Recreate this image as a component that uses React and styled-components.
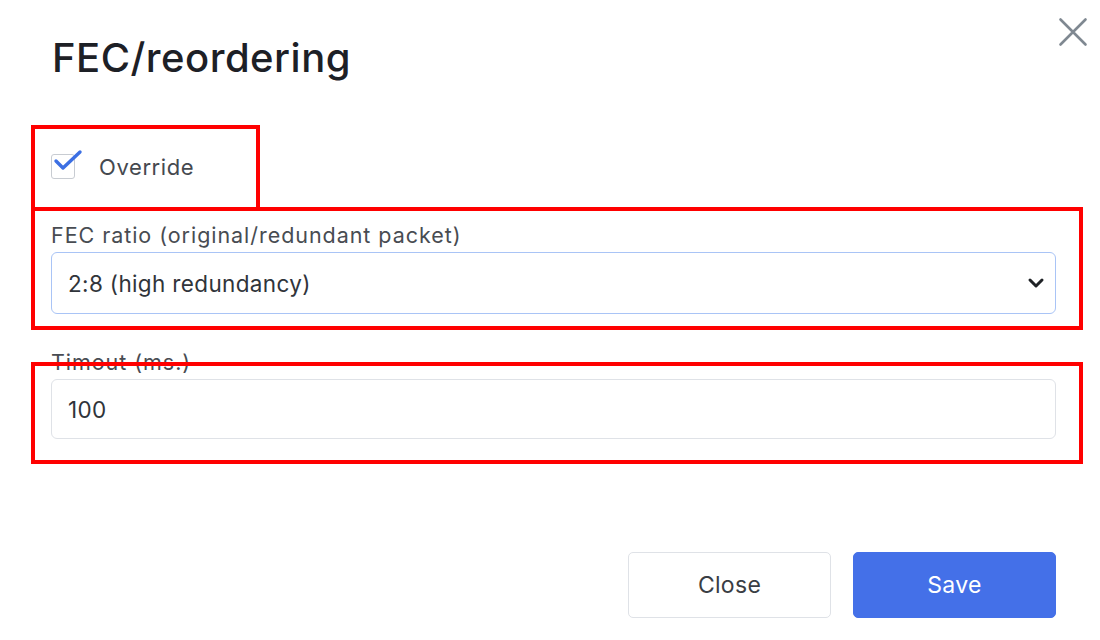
import React from 'react'
import styled, { createGlobalStyle } from 'styled-components'

const GlobalStyle = createGlobalStyle`
	html, body {
		margin: 0;
		padding: 0;
		background: #fff;
	}
	body {
		font-family: Inter, "Noto Sans", sans-serif;
		color: #22252a;
	}
`

const Dialog = styled.div`
	position: relative;
	width: 1100px;
	height: 640px;
	box-sizing: border-box;
	padding: 0 44px 0 51px;
`

const Header = styled.div`
	display: flex;
	justify-content: space-between;
	align-items: flex-start;
	height: 120px;
`

const Title = styled.h2`
	margin: 33px 0 0 1px;
	font-size: 40px;
	font-weight: 450;
	letter-spacing: 0.5px;
	color: #1d2026;
`

const CloseIcon = styled.button`
	margin: 15px -34px 0 0;
	padding: 0;
	border: none;
	background: none;
	width: 34px;
	height: 34px;
	display: flex;
	align-items: center;
	justify-content: center;
`

const CheckRow = styled.label`
	display: flex;
	align-items: center;
	gap: 24px;
	height: 50px;
	margin-top: 22px;
	font-size: 22px;
	letter-spacing: 0.6px;
	color: #45494f;
`

const Box = styled.span`
	position: relative;
	width: 22px;
	height: 23px;
	margin-top: -2px;
	border: 1.5px solid #c8ccd2;
	border-radius: 3px;
	flex-shrink: 0;

	svg {
		position: absolute;
		left: 1px;
		top: -6px;
	}
`

const Field = styled.div`
	display: flex;
	flex-direction: column;
	gap: 4px;
	margin-top: ${p => p.$top}px;
`

const Label = styled.div`
	font-size: 21.5px;
	letter-spacing: 0.95px;
	color: #484c52;
	line-height: 26px;
`

const Control = styled.div`
	display: flex;
	align-items: center;
	justify-content: space-between;
	height: ${p => p.$h}px;
	box-sizing: border-box;
	padding: 0 10px 0 16px;
	border: 1.5px solid ${p => (p.$focus ? '#a9c4f6' : '#dfe2e7')};
	border-radius: 6px;
	font-size: 22.5px;
	letter-spacing: 0.35px;
	color: #30343a;
`

const Footer = styled.div`
	display: flex;
	justify-content: flex-end;
	gap: 22px;
	margin-top: 113px;
`

const Button = styled.button`
	width: 203px;
	height: 66px;
	border-radius: 5px;
	font-family: inherit;
	font-size: 23px;
	letter-spacing: 0.3px;
	border: 1.5px solid ${p => (p.$primary ? '#4470e8' : '#dfe2e7')};
	background: ${p => (p.$primary ? '#4470e8' : '#fff')};
	color: ${p => (p.$primary ? '#fff' : '#3a3e44')};
`

const Highlight = styled.div`
	position: absolute;
	left: ${p => p.$x}px;
	top: ${p => p.$y}px;
	width: ${p => p.$w}px;
	height: ${p => p.$h}px;
	border: 4px solid #ff0000;
	box-sizing: border-box;
	pointer-events: none;
`

const App = () => {
	return (
		<>
			<GlobalStyle />
			<Dialog>
				<Header>
					<Title>FEC/reordering</Title>
					<CloseIcon>
						<svg width="30" height="30" viewBox="0 0 30 30">
							<path d="M2.5 2.5 L27.5 27.5 M27.5 2.5 L2.5 27.5" stroke="#7f8891" strokeWidth="2.6" strokeLinecap="round" />
						</svg>
					</CloseIcon>
				</Header>

				<CheckRow>
					<Box>
						<svg width="30" height="24" viewBox="0 0 30 24">
							<path d="M3 12 L10 19 L27 3" fill="none" stroke="#3c6fe3" strokeWidth="3.4" strokeLinecap="round" strokeLinejoin="round" />
						</svg>
					</Box>
					Override
				</CheckRow>

				<Field $top={30}>
					<Label>FEC ratio (original/redundant packet)</Label>
					<Control $h={62} $focus>
						2:8 (high redundancy)
						<svg width="18" height="12" viewBox="0 0 18 12">
							<path d="M3 3 L9 9 L15 3" fill="none" stroke="#1f2226" strokeWidth="3" strokeLinecap="round" strokeLinejoin="round" />
						</svg>
					</Control>
				</Field>

				<Field $top={35}>
					<Label>Timout (ms.)</Label>
					<Control $h={60}>100</Control>
				</Field>

				<Footer>
					<Button>Close</Button>
					<Button $primary>Save</Button>
				</Footer>

				<Highlight $x={31} $y={125} $w={229} $h={86} />
				<Highlight $x={31} $y={207} $w={1052} $h={123} />
				<Highlight $x={31} $y={362} $w={1052} $h={102} />
			</Dialog>
		</>
	)
}

export default App
